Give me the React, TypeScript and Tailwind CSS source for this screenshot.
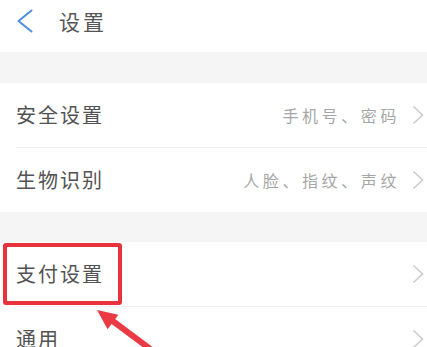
const font = { fontFamily: '"Noto Sans CJK SC", "Noto Sans", sans-serif' };

function Chevron() {
  return (
    <svg width="12" height="20" viewBox="0 0 12 20" className="shrink-0">
      <path d="M1.5 1.5 L10.5 10 L1.5 18.5" fill="none" stroke="#cccccc" strokeWidth="1.6" />
    </svg>
  );
}

function BackIcon() {
  return (
    <svg width="18" height="24" viewBox="0 0 18 24" className="ml-[16px] shrink-0">
      <path d="M15.5 1.5 L2.5 12 L15.5 22.5" fill="none" stroke="#4a8fe0" strokeWidth="2" strokeLinecap="round" strokeLinejoin="round" />
    </svg>
  );
}

function Row({ title, sub, divider }: { title: string; sub?: string; divider?: boolean }) {
  return (
    <div className="bg-white">
      <div className="h-[64px] flex items-center pl-4 pr-[3px]">
        <span className="text-[20px] tracking-[2px] text-[#525252] leading-none">{title}</span>
        <div className="flex-1" />
        {sub && (
          <span className="text-[16px] tracking-[3.6px] text-[#a6a6a6] leading-none mr-[12px]">{sub}</span>
        )}
        <Chevron />
      </div>
      {divider && <div className="h-px bg-[#efefef] ml-4" />}
    </div>
  );
}

export default function App() {
  return (
    <div className="relative w-[427px] h-[347px] overflow-hidden bg-[#f5f5f5]" style={font}>
      <div className="h-[52px] bg-white flex items-start pt-[9px]">
        <BackIcon />
        <span className="ml-[25px] text-[21px] tracking-[3px] text-[#555555] leading-[24px]">设置</span>
      </div>
      <div className="h-[31px]" />
      <Row title="安全设置" sub="手机号、密码" divider />
      <Row title="生物识别" sub="人脸、指纹、声纹" />
      <div className="h-[30px]" />
      <Row title="支付设置" divider />
      <Row title="通用" />

      <div className="absolute left-[3px] top-[243px] w-[119px] h-[62px] border-[4px] border-[#e8333d] rounded-[3px]" />
      <svg className="absolute left-0 top-0" width="427" height="347" viewBox="0 0 427 347">
        <line x1="110" y1="319" x2="165" y2="360" stroke="#ec3a44" strokeWidth="6" />
        <polygon points="97,310 107.6,329.2 118.4,314.8" fill="#ec3a44" />
      </svg>
    </div>
  );
}
